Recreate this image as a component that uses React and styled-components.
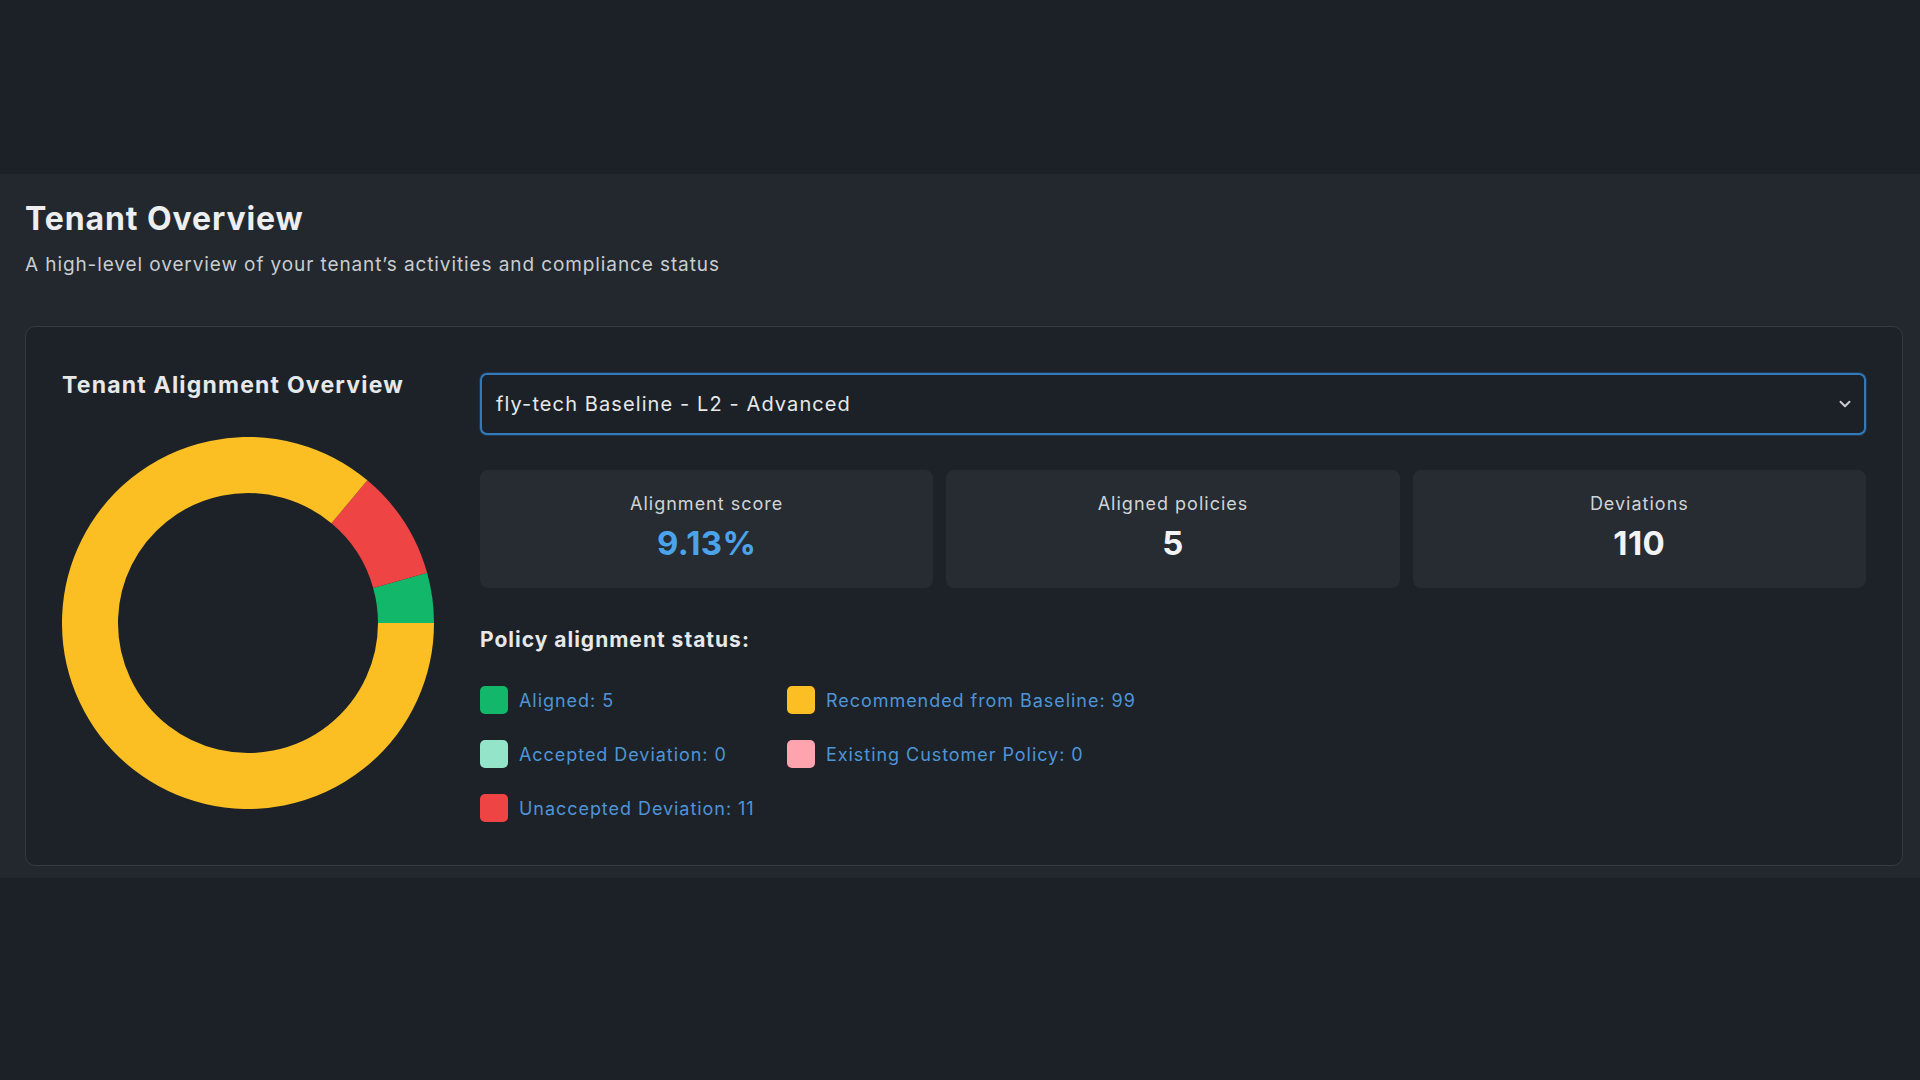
import React from "react";
import styled, { createGlobalStyle } from "styled-components";
import { ChevronDown } from "lucide-react";

const GlobalStyle = createGlobalStyle`
  html, body {
    margin: 0;
    padding: 0;
    background: #1b2126;
    font-family: Inter, "Noto Sans", "Liberation Sans", sans-serif;
  }
  * { box-sizing: border-box; }
`;

const Page = styled.div`
  width: 1920px;
  height: 1080px;
  background: #1b2126;
  display: flex;
  flex-direction: column;
`;

const TopBar = styled.div`
  height: 174px;
  flex-shrink: 0;
`;

const Section = styled.section`
  background: #22282d;
  padding: 27px 17px 12px 25px;
`;

const Title = styled.h1`
  margin: 0;
  font-size: 32px;
  line-height: 36px;
  font-weight: 700;
  color: #eceef0;
  letter-spacing: 0.9px;
`;

const Subtitle = styled.p`
  margin: 16px 0 0;
  font-size: 19px;
  line-height: 24px;
  color: #c9cdd1;
  letter-spacing: 0.9px;
`;

const Card = styled.div`
  margin-top: 49px;
  background: #1c2228;
  border: 1px solid #343b42;
  border-radius: 10px;
  padding: 46px 36px 43px;
  display: flex;
  gap: 40px;
`;

const LeftCol = styled.div`
  width: 378px;
  flex-shrink: 0;
  display: flex;
  flex-direction: column;
`;

const CardTitle = styled.h2`
  margin: 0;
  font-size: 23px;
  line-height: 24px;
  font-weight: 700;
  color: #e6e8ea;
  white-space: nowrap;
  letter-spacing: 1.2px;
`;

const DonutWrap = styled.div`
  margin-top: 40px;
  width: 372px;
  height: 372px;
`;

const RightCol = styled.div`
  flex: 1;
  display: flex;
  flex-direction: column;
`;

const Select = styled.div`
  height: 62px;
  border: 2px solid #3079bb;
  border-radius: 7px;
  background: #1b2127;
  box-shadow: 0 0 0 1px rgba(48, 121, 187, 0.25);
  display: flex;
  align-items: center;
  justify-content: space-between;
  padding: 0 10px 0 14px;
  font-size: 20px;
  color: #e6e8ea;
  letter-spacing: 1.1px;
`;

const StatRow = styled.div`
  margin-top: 35px;
  display: grid;
  grid-template-columns: repeat(3, 1fr);
  gap: 13px;
`;

const StatCard = styled.div`
  height: 118px;
  background: #262c31;
  border-radius: 8px;
  display: flex;
  flex-direction: column;
  align-items: center;
  justify-content: center;
`;

const StatLabel = styled.div`
  font-size: 18px;
  line-height: 22px;
  color: #d0d4d8;
  letter-spacing: 1px;
`;

const StatValue = styled.div`
  margin-top: 6px;
  font-size: 33px;
  line-height: 44px;
  font-weight: 700;
  color: ${(p) => p.$color || "#f1f3f5"};
  letter-spacing: 0.4px;
`;

const Heading = styled.h3`
  margin: 39px 0 0;
  font-size: 21px;
  line-height: 26px;
  font-weight: 700;
  color: #e6e8ea;
  letter-spacing: 1px;
`;

const Legend = styled.div`
  margin-top: 33px;
  display: grid;
  grid-template-columns: 307px 1fr;
  row-gap: 26px;
`;

const LegendItem = styled.div`
  display: flex;
  align-items: center;
  gap: 11px;
  height: 28px;
`;

const Swatch = styled.span`
  width: 28px;
  height: 28px;
  border-radius: 5px;
  background: ${(p) => p.$color};
  flex-shrink: 0;
`;

const LegendText = styled.span`
  font-size: 18px;
  color: #4f94d6;
  letter-spacing: 0.95px;
`;

const segments = [
  { label: "Aligned", value: 5, color: "#12b76a" },
  { label: "Accepted Deviation", value: 0, color: "#93e4c8" },
  { label: "Unaccepted Deviation", value: 11, color: "#ef4444" },
  { label: "Recommended from Baseline", value: 99, color: "#fbbf24" },
  { label: "Existing Customer Policy", value: 0, color: "#fda4af" },
];

const legendOrder = [
  segments[0],
  segments[3],
  segments[1],
  segments[4],
  segments[2],
];

function Donut() {
  const cx = 186;
  const cy = 186;
  const r = 158;
  const total = segments.reduce((s, x) => s + x.value, 0);
  let start = 0;
  const pt = (a) => {
    const rad = (a * Math.PI) / 180;
    return [cx + r * Math.cos(rad), cy - r * Math.sin(rad)];
  };
  return (
    <svg width="372" height="372" viewBox="0 0 372 372">
      {segments
        .filter((s) => s.value > 0)
        .map((s) => {
          const sweep = (s.value / total) * 360;
          const a0 = start;
          const a1 = start + sweep;
          start = a1;
          const [x0, y0] = pt(a0);
          const [x1, y1] = pt(a1);
          const large = sweep > 180 ? 1 : 0;
          return (
            <path
              key={s.label}
              d={`M ${x0} ${y0} A ${r} ${r} 0 ${large} 0 ${x1} ${y1}`}
              fill="none"
              stroke={s.color}
              strokeWidth="56"
            />
          );
        })}
    </svg>
  );
}

export default function App() {
  return (
    <>
      <GlobalStyle />
      <Page>
        <TopBar />
        <Section>
          <Title>Tenant Overview</Title>
          <Subtitle>
            A high-level overview of your tenant’s activities and compliance status
          </Subtitle>
          <Card>
            <LeftCol>
              <CardTitle>Tenant Alignment Overview</CardTitle>
              <DonutWrap>
                <Donut />
              </DonutWrap>
            </LeftCol>
            <RightCol>
              <Select>
                <span>fly-tech Baseline - L2 - Advanced</span>
                <ChevronDown size={18} strokeWidth={2.6} color="#c9cdd1" />
              </Select>
              <StatRow>
                <StatCard>
                  <StatLabel>Alignment score</StatLabel>
                  <StatValue $color="#4ba3ea">9.13%</StatValue>
                </StatCard>
                <StatCard>
                  <StatLabel>Aligned policies</StatLabel>
                  <StatValue>5</StatValue>
                </StatCard>
                <StatCard>
                  <StatLabel>Deviations</StatLabel>
                  <StatValue>110</StatValue>
                </StatCard>
              </StatRow>
              <Heading>Policy alignment status:</Heading>
              <Legend>
                {legendOrder.map((s) => (
                  <LegendItem key={s.label}>
                    <Swatch $color={s.color} />
                    <LegendText>
                      {s.label}: {s.value}
                    </LegendText>
                  </LegendItem>
                ))}
              </Legend>
            </RightCol>
          </Card>
        </Section>
      </Page>
    </>
  );
}
